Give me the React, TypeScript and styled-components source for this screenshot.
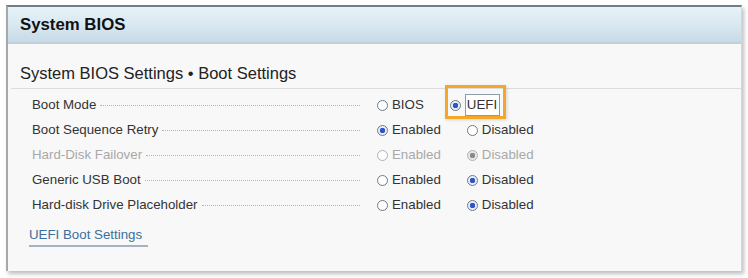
import React from "react";
import styled, { createGlobalStyle } from "styled-components";

const GlobalStyle = createGlobalStyle`
  body {
    margin: 0;
    background: #ffffff;
    font-family: "Liberation Sans", Arial, sans-serif;
  }
`;

const Page = styled.div`
  width: 748px;
  height: 278px;
  padding: 5px 0 0 6px;
  box-sizing: border-box;
`;

const Panel = styled.div`
  width: 736px;
  height: 266px;
  box-sizing: border-box;
  background: #f8f8f8;
  border-top: 2px solid #717e88;
  border-left: 2px solid #a4a9ad;
  border-right: 1px solid #d6d6d6;
  box-shadow: 2px 3px 4px rgba(0, 0, 0, 0.25);
  display: flex;
  flex-direction: column;
`;

const Header = styled.div`
  height: 35px;
  background: linear-gradient(#e8f2f8 0%, #d9e8f1 50%, #c7dae6 100%);
  border-bottom: 2px solid #c2d0da;
  display: flex;
  align-items: center;
  padding-left: 12px;
  font-size: 16.8px;
  font-weight: bold;
  color: #111;
`;

const Title = styled.div`
  font-size: 16.5px;
  color: #222;
  padding: 20px 0 0 12px;
  height: 24px;
`;

const Divider = styled.div`
  margin-left: 3px;
  border-top: 1px solid #dcdcdc;
`;

const Rows = styled.div`
  display: flex;
  flex-direction: column;
  padding: 3px 0 0 24px;
`;

const Row = styled.div<{ $disabled?: boolean }>`
  height: 25px;
  display: flex;
  align-items: center;
  font-size: 13.3px;
  color: ${p => (p.$disabled ? "#a8a8a8" : "#333")};
`;

const Label = styled.div`
  width: 328px;
  display: flex;
  align-items: baseline;
  gap: 4px;
  white-space: nowrap;
`;

const Leader = styled.span`
  flex: 1;
  border-bottom: 1px dotted #b4b4b4;
  transform: translateY(-3px);
`;

const Options = styled.div`
  display: flex;
  align-items: center;
  gap: 26px;
  padding-left: 17px;
`;

const Option = styled.div<{ $highlight?: boolean }>`
  position: relative;
  display: flex;
  align-items: center;
  gap: 4px;

  ${p =>
    p.$highlight &&
    `
    &::after {
      content: "";
      position: absolute;
      left: -5px;
      top: -9px;
      width: 55px;
      height: 28px;
      border: 3px solid #f3a82a;
      box-shadow: 1px 1px 3px rgba(0, 0, 0, 0.15);
    }
  `}
`;

const Radio = styled.span<{ $checked?: boolean; $disabled?: boolean }>`
  width: 11px;
  height: 11px;
  box-sizing: border-box;
  border-radius: 50%;
  border: 1px solid ${p => (p.$disabled ? "#b0b0b0" : "#6f7a86")};
  background: ${p =>
    p.$checked
      ? p.$disabled
        ? "radial-gradient(circle, #8a8a8a 0 2.5px, #e8e8e8 3px)"
        : "radial-gradient(circle, #2f55c8 0 2.5px, #e6ecfa 3px)"
      : "#fff"};
  margin-top: 1px;
`;

const Focus = styled.span`
  border: 1px solid #8d9aa8;
  padding: 2px 2px 2px 1px;
  line-height: 16px;
  background: #fff;
`;

const LinkText = styled.a`
  display: inline-block;
  align-self: flex-start;
  margin: 10px 0 0 21px;
  padding: 0 6px 3px 0;
  font-size: 13.3px;
  color: #3c6e9c;
  text-decoration: none;
  border-bottom: 2px solid #a2b4c3;
`;

type Opt = { text: string; checked?: boolean; focus?: boolean };

const settings: { label: string; disabled?: boolean; options: Opt[] }[] = [
  { label: "Boot Mode", options: [{ text: "BIOS" }, { text: "UEFI", checked: true, focus: true }] },
  { label: "Boot Sequence Retry", options: [{ text: "Enabled", checked: true }, { text: "Disabled" }] },
  { label: "Hard-Disk Failover", disabled: true, options: [{ text: "Enabled" }, { text: "Disabled", checked: true }] },
  { label: "Generic USB Boot", options: [{ text: "Enabled" }, { text: "Disabled", checked: true }] },
  { label: "Hard-disk Drive Placeholder", options: [{ text: "Enabled" }, { text: "Disabled", checked: true }] }
];

const App = () => (
  <>
    <GlobalStyle />
    <Page>
      <Panel>
        <Header>System BIOS</Header>
        <Title>System BIOS Settings • Boot Settings</Title>
        <Divider />
        <Rows>
          {settings.map(s => (
            <Row key={s.label} $disabled={s.disabled}>
              <Label>
                {s.label}
                <Leader />
              </Label>
              <Options>
                {s.options.map(o => (
                  <Option key={o.text} $highlight={o.focus}>
                    <Radio $checked={o.checked} $disabled={s.disabled} />
                    {o.focus ? <Focus>{o.text}</Focus> : o.text}
                  </Option>
                ))}
              </Options>
            </Row>
          ))}
        </Rows>
        <LinkText href="#">UEFI Boot Settings</LinkText>
      </Panel>
    </Page>
  </>
);

export default App;
